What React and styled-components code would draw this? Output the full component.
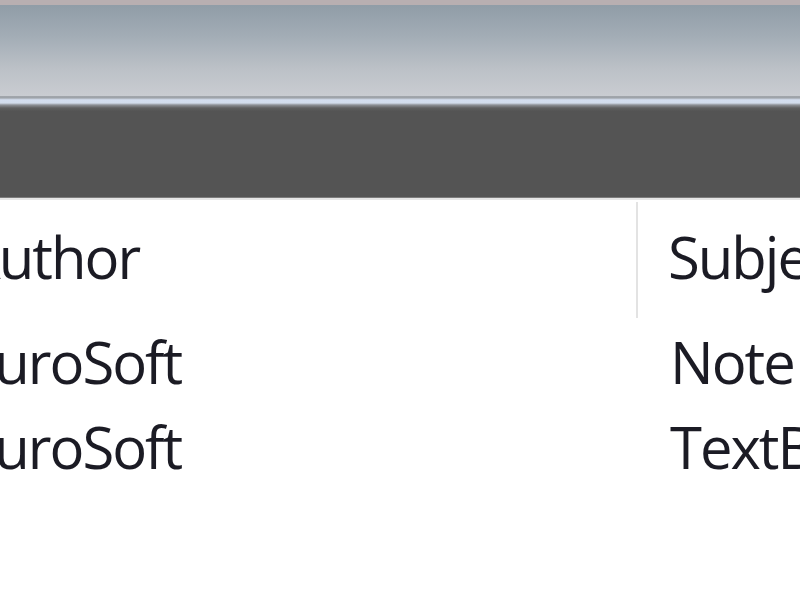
import React from "react";
import styled, { createGlobalStyle } from "styled-components";

const Global = createGlobalStyle`
  html, body { margin: 0; padding: 0; background: #ffffff; }
  body { width: 800px; height: 600px; overflow: hidden; }
`;

const Screen = styled.div`
  width: 800px;
  height: 600px;
  overflow: hidden;
  background: #ffffff;
  display: flex;
  flex-direction: column;
  font-family: "Open Sans", "Noto Sans", sans-serif;
`;

const TopEdge = styled.div`
  height: 5px;
  flex: none;
  background: #b8afb1;
`;

const TitleBar = styled.div`
  height: 91px;
  flex: none;
  background: linear-gradient(180deg, #909da7 0%, #a3adb6 35%, #bcc1c7 70%, #c9ccd1 100%);
`;

const Bevel = styled.div`
  height: 15px;
  flex: none;
  background: linear-gradient(
    180deg,
    #a2a6ab 0px,
    #9da2a8 2px,
    #c4ccd8 3px,
    #d4def0 4px,
    #d2dcec 7px,
    #8d9096 9px,
    #5f5f60 12px,
    #555555 15px
  );
`;

const DarkBand = styled.div`
  height: 86px;
  flex: none;
  background: #545454;
  border-bottom: 1px solid #7c7c7c;
`;

const HeaderRule = styled.div`
  height: 2px;
  flex: none;
  background: #e6e6e6;
`;

const Table = styled.div`
  display: grid;
  grid-template-columns: 674px 1fr;
  margin-left: -36px;
  color: #1b1b24;
  font-size: 58px;
  font-weight: 500;
  letter-spacing: -2px;
  line-height: 1;
`;

const HeadCell = styled.div`
  height: 118px;
  box-sizing: border-box;
  padding-top: 28px;
  padding-left: ${(p) => (p.$first ? "0" : "30px")};
  white-space: nowrap;
  overflow: hidden;
  ${(p) =>
    p.$first &&
    `
    border-right: 2px solid #e3e3e3;
    margin-top: 2px;
    height: 116px;
    padding-top: 26px;
  `}
`;

const Cell = styled.div`
  height: 85px;
  box-sizing: border-box;
  padding-top: 15px;
  padding-left: ${(p) => (p.$first ? "0" : "32px")};
  white-space: nowrap;
  overflow: hidden;
`;

const rows = [
  ["EuroSoft", "Note"],
  ["EuroSoft", "TextBox"],
];

export default function App() {
  return (
    <>
      <Global />
      <Screen>
        <TopEdge />
        <TitleBar />
        <Bevel />
        <DarkBand />
        <HeaderRule />
        <Table>
          <HeadCell $first>Author</HeadCell>
          <HeadCell>Subject</HeadCell>
          {rows.map(([a, s], i) => (
            <React.Fragment key={i}>
              <Cell $first>{a}</Cell>
              <Cell>{s}</Cell>
            </React.Fragment>
          ))}
        </Table>
      </Screen>
    </>
  );
}
